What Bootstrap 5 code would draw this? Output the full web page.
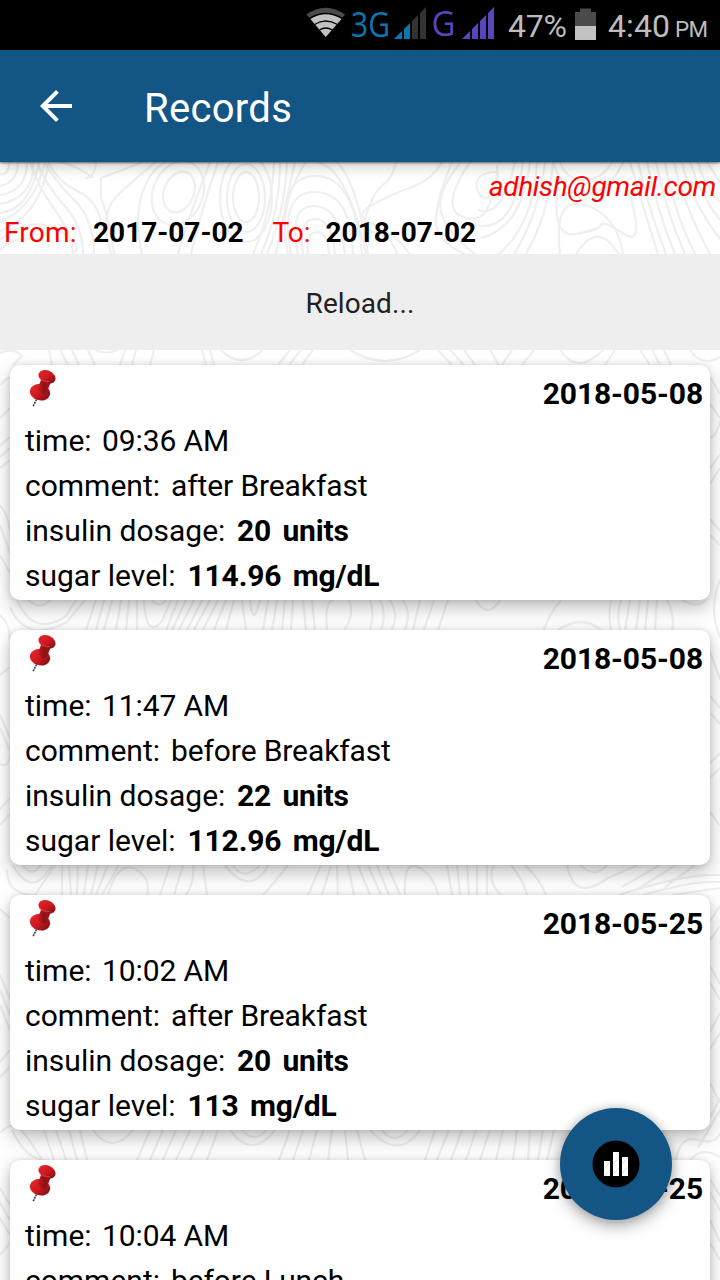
<!DOCTYPE html>
<html lang="en">
<head>
<meta charset="utf-8">
<meta name="viewport" content="width=device-width, initial-scale=1">
<title>Records</title>
<link href="https://cdn.jsdelivr.net/npm/bootstrap@5.3.0/dist/css/bootstrap.min.css" rel="stylesheet">
<style>
body{font-family:Roboto,sans-serif;color:#000;background:#fff;height:1280px;overflow:hidden;line-height:1.15}
.screen{width:720px;height:1280px;overflow:hidden}
.contours{left:0;top:0;z-index:-1}
.status{height:50px;background:#000}
.appbar{height:112px;background:#135685;box-shadow:0 1px 2px rgba(0,0,0,.55),0 3px 14px rgba(0,0,0,.25);padding-left:32px}
.title{font-size:40px;margin-left:64px;letter-spacing:.3px;padding-top:6px}
.mail{height:46px;font-size:28px;line-height:49px;padding-right:4px;color:red;letter-spacing:-.35px}
.range{height:46px;font-size:28px;line-height:50px;padding-left:4px}
.range-from{width:89px;letter-spacing:.2px}
.range-start{width:179.5px}
.range-to{width:53px}
.red{color:red}
.reload{height:96px;background:#eee;font-size:28px;line-height:99px;color:#212121;border:0;border-radius:0;letter-spacing:.08px}
.records{padding:15px 10px 0;gap:30px}
.rec{height:235px;border-radius:10px;background:#fff;font-size:30px;padding:5px 7px 0 15px;box-shadow:0 8px 18px rgba(0,0,0,.25),0 0 6px rgba(0,0,0,.13);flex:none}
.rec-top{height:48px}
.rec-date{line-height:48px;letter-spacing:-.1px}
.line{height:45px;line-height:45px}
.value{letter-spacing:-.11px}
.value b{letter-spacing:-.15px}
.fab{width:112px;height:112px;left:560px;top:1108px;background:#135685;box-shadow:0 6px 16px rgba(0,0,0,.32),0 0 8px rgba(0,0,0,.16)}
</style>
</head>
<body>
<svg width="0" height="0" class="position-absolute">
<defs>
<linearGradient id="pinTop" x1="0" x2="1" y1="0" y2=".5"><stop offset="0" stop-color="#ea292e"/><stop offset=".6" stop-color="#cf1820"/><stop offset="1" stop-color="#8d1318"/></linearGradient>
<linearGradient id="pinNeck"><stop offset="0" stop-color="#d91d24"/><stop offset=".5" stop-color="#8c1216"/><stop offset="1" stop-color="#a3161b"/></linearGradient>
<symbol id="pin" viewBox="0 0 30 38">
<path d="M7.500 29.500 4 36.500" stroke="#333" stroke-width="1.500" stroke-dasharray="2 .7"/>
<ellipse cx="11" cy="22.300" rx="10.300" ry="8" transform="rotate(15 11 22.300)" fill="url(#pinTop)"/>
<path d="m12 10-4 9.500q4 5.500 9.500 3.500l4-10z" fill="url(#pinNeck)"/>
<ellipse cx="18" cy="6.800" rx="8.900" ry="6.300" transform="rotate(24 18 6.800)" fill="url(#pinTop)"/>
<path d="M10.500 7.500q4 4.500 10 4" fill="none" stroke="#f0605f" stroke-width=".8" stroke-dasharray="2 1"/>
</symbol>
</defs>
</svg>
<main class="screen position-relative d-flex flex-column">
<svg class="contours position-absolute" width="720" height="1280" fill="none" stroke="#efefef" stroke-width="2.200">
<path d="M0 175q10-1 9-12M0 186q18-4 18-24M0 195q27-4 27-33M0 204q35-7 33-42M0 213q30-3 39-51M0 222q35-15 45-60M0 231q40-15 49-69M30 162q8 25 25 48t18 44M37 162q8 22 27 43t19 49M44 162q12 20 31 39t19 53M60 162q18 4 33 16M48 162q10 20 31 30t23 38M0 240q30-25 58-10t14 24M0 250q20-18 40-8"/>
<path d="M96 162q-1 16-11 16M101 198v-20l42-16M101 198q7 15 13 56M111 254q-12-40 5-57t40-35M142 254q-8-35 0-60t24-32"/>
<ellipse cx="179" cy="192" rx="15" ry="21" transform="rotate(22 179 192)"/><ellipse cx="178" cy="193" rx="25" ry="33" transform="rotate(22 178 193)"/>
<ellipse cx="246" cy="197" rx="13" ry="25"/><ellipse cx="246" cy="198" rx="19" ry="34"/><ellipse cx="246" cy="198" rx="26" ry="44"/>
<path d="M210 162q-18 46-32 92M218 162q-16 46-27 92M274 162q-2 50-21 92M280 162q0 50-19 92M287 162q-2 50-20 92M295 162q-10 44-19 92M306 162q-30 46-18 92"/>
<path d="M298 254q-10-48 16-48t31 48M291 254q-12-62 24-62t38 62M286 240q-8-64 30-64t46 78M303 254q-5-35 12-35t20 35M308 254q-2-22 9-22t12 22M318 162q30 8 48 92M337 162q20 20 31 92"/>
<path d="M396 162q-4 17-12 22t-16 25 8 24 21 21M442 162q-10 18-30 25t-40 18 2 20 36 29M452 162q-13 30-16 54t29 38M461 162q-25 30-20 50t34 42M470 162q-30 45-9 54t29-13 7-38M498 172q-24 0-21 16t20 6zM478 210q24 9 37-48M474 225q40 10 49-63M481 238q41-10 49-76M499 254q35-30 38-92M514 254q25-40 31-92M526 254q23-40 27-92"/>
<path d="M553 162q10 32 33 32t37-32M560 162q6 18 24 18t28-18M560 254q-7-59 25-49t38 49M557 195q-4 43 19 39t25-9 23 9 6-40M576 254q18-28 34-11l9 11M630 162q10 35 28 92M638 162q10 45 28 92M647 162q9 45 28 92M656 162q10 50 29 92M665 162q8 48 30 92M674 162q9 42 36 92M682 162q8 37 38 77M690 162q10 32 30 58M698 162q5 22 22 40M707 162l13 20"/>
<path d="M0 353q14-6 22 3l-9 9M49 350l3 15M60 350l8 15M72 350l7 15M95 350q12 5 22 0M88 350l7 15M125 350l-5 15M136 350l-4 15M154 350l-4 15M202 350l4 15M210 350l4 15M221 350q20 20 42 0M290 350l-12 15M301 350l-12 15M313 350l-11 15M350 350q35 22 70 0M438 350l14 15M450 350l14 15M464 350l11 15M490 350l9 15M512 350l-10 15M534 350l-12 15M560 350q17 26 43 0M615 350l-10 15M640 350l10 15M652 350l8 15M664 350l7 15M690 350q12 18 30 7"/>
<path d="M28 600q12 11 22 0M17 600q17 38 49 16l10-16M10 607q16 37 57 15l18-22M96 600l-10 30M104 600l-8 30M112 600l-8 30M121 600l-5 30M129 600l-3 30M137 600v30M144 600q2 40 18 21l9-21M152 600q7 9 14 0M178 600l-12 30M186 600l-14 30M194 600l-15 30M202 600l-15 30M210 600l-16 30M218 600l-15 30M226 600l-12 30M234 600l-8 30M242 600l4 30M250 600q3 30 10 0M268 600l-5 30M277 600l-5 30M285 600l-3 30M293 600l-2 30M303 600l3 30M312 600l3 30M327 630q-3-30 7-30M349 600q6 15-5 30M370 600q5 14 0 30M380 600q7 14 1 30M390 600q9 14 2 30M402 600q10 10 3 30M420 600l-7 30M434 600l-10 30M448 600l-10 30M476 600q11 20 24 0M561 600q-12 14-17 30M558 630q24-16 43 0M611 600q-3 13 0 30M621 600q-5 16-1 30M630 600l-5 30M640 600l-4 30M648 600l-3 30M657 600l-2 30M667 600q8 15 5 30M682 600q16 9 24 0"/>
<path d="M22 865q10 13 19 0M13 865q19 35 39 0M7 870q0 25 28 25l20-30M62 865v30M69 865l2 30M78 865l-1 30M88 865l-4 30M98 865l-7 30M108 895q12-42 35-20 7 8 4 20M108 865l-12 30M119 865l-17 30M170 865l-10 30M183 865l-9 30M193 865q2 17-7 30M203 865l4 30M225 865q28 37 49-10M233 865q10 17 27 0M288 865q-14 18-25 30M321 865l-13 30M331 865l-9 30M337 865l1 30M348 865l6 30M358 865l12 30M368 865l13 30M377 865l12 30M387 865l13 30M405 895q-2-35 13-28t20 28M447 865l5 30M457 865l3 30M467 865l2 30M477 865v30M487 865v30M494 865q-8 15 7 30M511 865q13 16 16 30M525 865q16 16 21 30M567 865q7 38 41 13l30-13M580 865q15 14 27 0M720 875q-32-2-102 20M720 882q-24-2-77 13M720 888l-48 7M660 865l-38 22M676 865l-40 25M695 865l-30 22"/>
<path d="M0 1133q12-13 21-3t21 30M12 1130q16 33 37 30M44 1130l10 30M56 1130l10 30M69 1130l8 30M80 1130l7 30M93 1130q19 26 40 0M150 1130l-13 30M163 1130l-13 30M176 1130l-13 30M190 1130l-14 30M204 1130l-14 30M218 1130l-11 30M230 1130q22 30 45 0M242 1130q13 14 24 0M290 1130l-11 30M303 1130l-10 30M317 1130l-8 30M332 1130l-4 30M345 1130l3 30M357 1130l8 30M370 1130q29 31 50 0M382 1130q12 16 26 0M435 1130l-10 30M449 1130l-12 30M462 1130l-11 30M476 1130l-10 30M490 1130l-10 30M503 1130l-7 30M517 1130l-4 30M530 1130l-2 30M543 1130l-5 30M554 1130l-7 30M676 1160q4-25 22-20t22-7M690 1160q12-14 30-3M720 1110l-22 38M720 1098l-10 20"/>
<path d="M0 385q20-20 10 10M0 418l10-10M0 446l10-9M0 457l10-9M0 468l10-8M0 505q8 10 10 26M0 525l10 28M0 555l10 18M0 615q10 8 10 26M0 675l10-8M0 715l10 23M0 728l10 23M0 764q9 4 10-10M0 809l10-11M0 825l10-11M0 909l10 9M0 975l10 24M0 990l10 25M0 1005l10 25M0 1062l10-12M0 1077l10-10M0 1188l10 17M0 1203l10 17M0 1218l10 17M0 1255l10-12M710 377l10 17M710 404l10 14M710 438q8-3 10-18M710 469l10-15M710 484l10-16M710 519l10 12M710 535l10 10M720 580q-12 30 0 57M710 652l10 27M710 696l10 12M710 713l10 11M710 763l10-10M710 778l10-10M710 812l10 14M710 921l10-15M710 940l10-14M710 966l10 18M710 983l10 17M710 1032l10-19M710 1049l10-16M710 1083l10 20M710 1179l10 17M710 1192l10 18M710 1220l10 22M710 1243l10 17"/>
</svg>

<div class="status position-relative flex-shrink-0">
<svg class="d-block" width="720" height="50" font-family="Roboto, sans-serif" fill="#bdbdbd">
<path d="M306.500 14.500q19-13.500 38.500 0L325.700 37z" fill="#4b4b4b"/>
<path d="M310.500 19q15-10 31 0L325.700 37z" fill="#c2c2c2"/>
<path d="M309.500 18.500q16-10 33 0M314.500 24.500q11-7 23 0M319.500 30q6-4 13 0" fill="none" stroke="#000" stroke-width="1.300"/>
<text x="351" y="37" font-size="34" font-family="Open Sans, sans-serif" fill="#0878b2" textLength="39" lengthAdjust="spacingAndGlyphs">3G</text>
<path d="M394 39l8-8v8zM404 29l6-6v16h-6z" fill="#0878b2"/><path d="M412 21l6-6v24h-6zM420 13l6-6v32h-6z" fill="#333"/>
<text x="431.500" y="36" font-size="34" font-family="Open Sans, sans-serif" fill="#5b45bd" textLength="24" lengthAdjust="spacingAndGlyphs">G</text>
<path d="M462 39l8-8v8zM472 29l6-6v16h-6zM480 21l6-6v24h-6zM488 13l6-6v32h-6z" fill="#5b45bd"/>
<text x="508" y="37" font-size="32" textLength="59">47%</text>
<path d="M575 12h5V8.500h11V12h5v14h-21z" fill="#4b4b4b"/><path d="M575 26h21v14h-21z" fill="#c2c2c2"/>
<text x="608" y="37" font-size="32" textLength="62">4:40</text><text x="675" y="37" font-size="22.400" textLength="33">PM</text>
</svg>
</div>
<nav class="appbar d-flex align-items-center text-white position-relative flex-shrink-0">
<svg width="48" height="48" viewBox="0 0 24 24" fill="#fff"><path d="M20 11H7.830l5.590-5.590L12 4l-8 8 8 8 1.410-1.410L7.830 13H20z"/></svg>
<span class="title">Records</span>
</nav>
<div class="mail text-end fst-italic flex-shrink-0">adhish@gmail.com</div>
<div class="range d-flex flex-shrink-0"><span class="red range-from">From:</span><b class="range-start">2017-07-02</b><span class="red range-to">To:</span><b>2018-07-02</b></div>
<button class="reload w-100 p-0 text-center flex-shrink-0">Reload...</button>
<section class="records d-flex flex-column" id="records"></section>
<button class="fab position-absolute rounded-circle border-0 p-0 d-flex align-items-center justify-content-center" aria-label="Chart">
<svg width="48" height="48"><circle cx="24" cy="24" r="23.500"/><path d="M12 21h6v15h-6zM21 12h6v24h-6zM30 17h6v19h-6z" fill="#fff"/><path d="M12 29l6-6M12 36l6-6M21 24l6-6M21 34l6-6M30 24l6-6M30 33l6-6" stroke="#bbb" stroke-width=".5"/></svg>
</button>
</main>
<script>
const records=[
["2018-05-08","09:36 AM","after Breakfast","20","114.96"],
["2018-05-08","11:47 AM","before Breakfast","22","112.96"],
["2018-05-25","10:02 AM","after Breakfast","20","113"],
["2018-05-25","10:04 AM","before Lunch"]];
const line=(label,value,w)=>`<div class="line d-flex"><span style="width:${w}px">${label}:</span><span class="value text-nowrap">${value}</span></div>`;
document.getElementById("records").innerHTML=records.map(r=>`<article class="rec d-flex flex-column">
<div class="rec-top d-flex justify-content-between"><svg class="ms-1" width="30" height="38"><use href="#pin"/></svg><b class="rec-date">${r[0]}</b></div>
${line("time",r[1],77)}${line("comment",r[2],146)}${r[3]?line("insulin dosage",`<b>${r[3]}<span class="ms-1"> units</span></b>`,212)+line("sugar level",`<b>${r[4]}<span class="ms-1"> mg/dL</span></b>`,162.5):""}</article>`).join("");
</script>
<script src="https://cdn.jsdelivr.net/npm/bootstrap@5.3.0/dist/js/bootstrap.bundle.min.js"></script>
</body>
</html>
